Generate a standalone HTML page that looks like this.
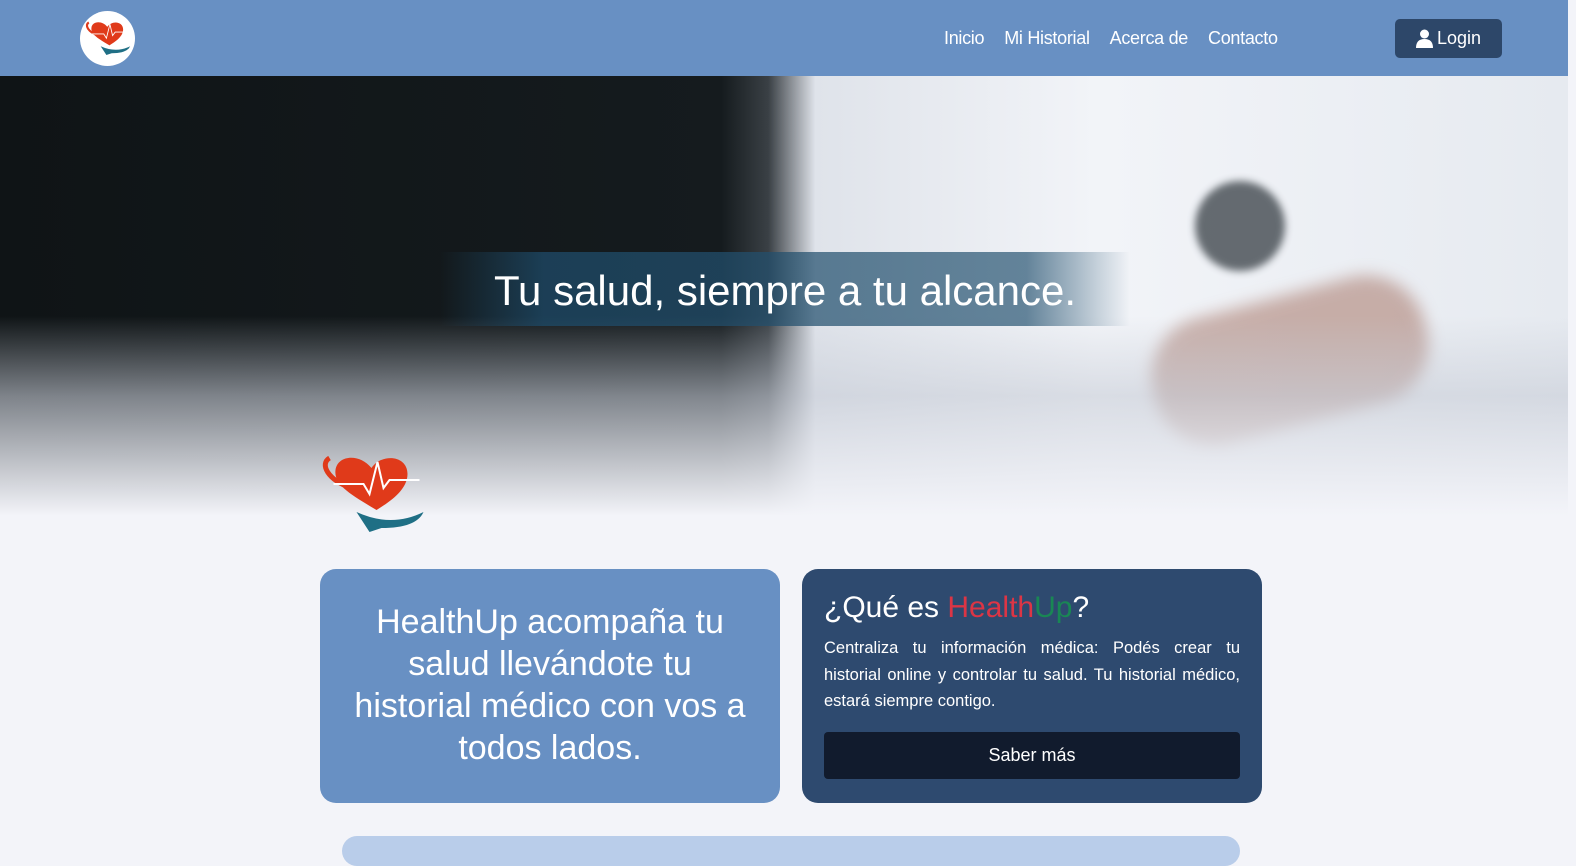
<!DOCTYPE html>
<html><head><meta charset="utf-8"><style>
*{margin:0;padding:0;box-sizing:border-box}
body{width:1576px;height:849px;overflow:hidden;background:#f3f4f9;font-family:"Liberation Sans",sans-serif;position:relative}
nav{position:absolute;top:0;left:0;width:1568px;height:76px;background:#6890c3;z-index:3}
.logo{position:absolute;left:80px;top:11px;width:55px;height:55px;border-radius:50%;background:#fff}
.links{position:absolute;top:28px;left:944px;color:#fff;font-size:18px;letter-spacing:-0.3px}
.links span{margin-right:20px}
.login{position:absolute;left:1395px;top:19px;width:107px;height:39px;background:#2d4769;border-radius:5px;color:#fff;font-size:18px;line-height:39px;padding-left:42px}
.hero{position:absolute;top:76px;left:0;width:1568px;height:440px;overflow:hidden;
background:linear-gradient(90deg,#0f1416 0%,#151b1e 46%,#3a4045 49%,#dfe3ea 52%,#f2f4f8 70%,#e6eaf0 100%)}
.fade{position:absolute;left:0;right:0;bottom:0;height:200px;background:linear-gradient(180deg,rgba(243,244,249,0),rgba(200,205,215,.6) 40%,#f3f4f9)}
.arm{position:absolute;left:1150px;top:220px;width:280px;height:130px;border-radius:60px;background:#a8786a;opacity:.55;transform:rotate(-15deg);filter:blur(8px)}
.steth{position:absolute;left:1195px;top:105px;width:90px;height:90px;border-radius:50%;background:#2a3238;opacity:.7;filter:blur(4px)}
.title{position:absolute;top:252px;left:440px;width:690px;height:74px;background:linear-gradient(90deg,rgba(30,70,100,0),rgba(30,75,105,.75) 15%,rgba(40,85,115,.7) 85%,rgba(40,85,115,0));color:#fff;font-size:42px;text-align:center;line-height:78px;z-index:2}
.bigheart{position:absolute;left:318px;top:450px;z-index:2}
.c1{position:absolute;left:320px;top:569px;width:460px;height:234px;background:#6890c3;border-radius:16px;color:#fff;font-size:34px;text-align:center;padding:32px 10px;line-height:42px;white-space:nowrap}
.c2{position:absolute;left:802px;top:569px;width:460px;height:234px;background:#2e4a6f;border-radius:16px;color:#fff;padding:22px 22px}
.c2 h2{font-size:30px;font-weight:normal;margin-bottom:10px}
.c2 p{font-size:16.5px;line-height:26.5px;text-align:justify}
.btn{margin-top:17px;height:47px;background:#111b2d;border-radius:4px;text-align:center;line-height:47px;font-size:18px}
.bot{position:absolute;left:342px;top:836px;width:898px;height:30px;background:#b9cdea;border-radius:16px}
</style></head><body>
<svg width="0" height="0" style="position:absolute"><defs><g id="h">
<path d="M8 8 C-2 14 6 30 30 38" stroke="#e03a1a" stroke-width="5" fill="none"/>
<path d="M55 60 C30 45 12 35 14 20 C16 5 38 3 50 18 C60 3 86 5 86 24 C86 40 68 52 55 60Z" fill="#e03a1a"/>
<path d="M12 34 H42 L48 44 L56 12 L62 38 L68 30 H98" stroke="#fff" stroke-width="2" fill="none"/>
<path d="M35 62 Q70 78 102 62 Q95 78 60 78 L48 82Z" fill="#1f6f85"/>
</g></defs></svg>
<nav>
<div class="logo"><svg width="55" height="55" viewBox="-12 -18 125 125"><use href="#h"/></svg></div>
<div class="links"><span>Inicio</span><span>Mi Historial</span><span>Acerca de</span><span>Contacto</span></div>
<div class="login"><svg style="position:absolute;left:21px;top:10px" width="17" height="19" viewBox="0 0 17 19"><circle cx="8.5" cy="5" r="4.5" fill="#fff"/><path d="M0 19 Q0 10 8.5 10 Q17 10 17 19Z" fill="#fff"/></svg>Login</div>
</nav>
<div class="hero"><div class="arm"></div><div class="steth"></div><div class="fade"></div></div>
<div class="title">Tu salud, siempre a tu alcance.</div>
<svg class="bigheart" width="112" height="84" viewBox="0 0 105 84"><use href="#h"/></svg>
<div class="c1">HealthUp acompaña tu<br>salud llevándote tu<br>historial médico con vos a<br>todos lados.</div>
<div class="c2"><h2>¿Qué es <span style="color:#dc3545">Health</span><span style="color:#198754">Up</span>?</h2>
<p>Centraliza tu información médica: Podés crear tu historial online y controlar tu salud. Tu historial médico, estará siempre contigo.</p>
<div class="btn">Saber más</div></div>
<div class="bot"></div>
</body></html>
